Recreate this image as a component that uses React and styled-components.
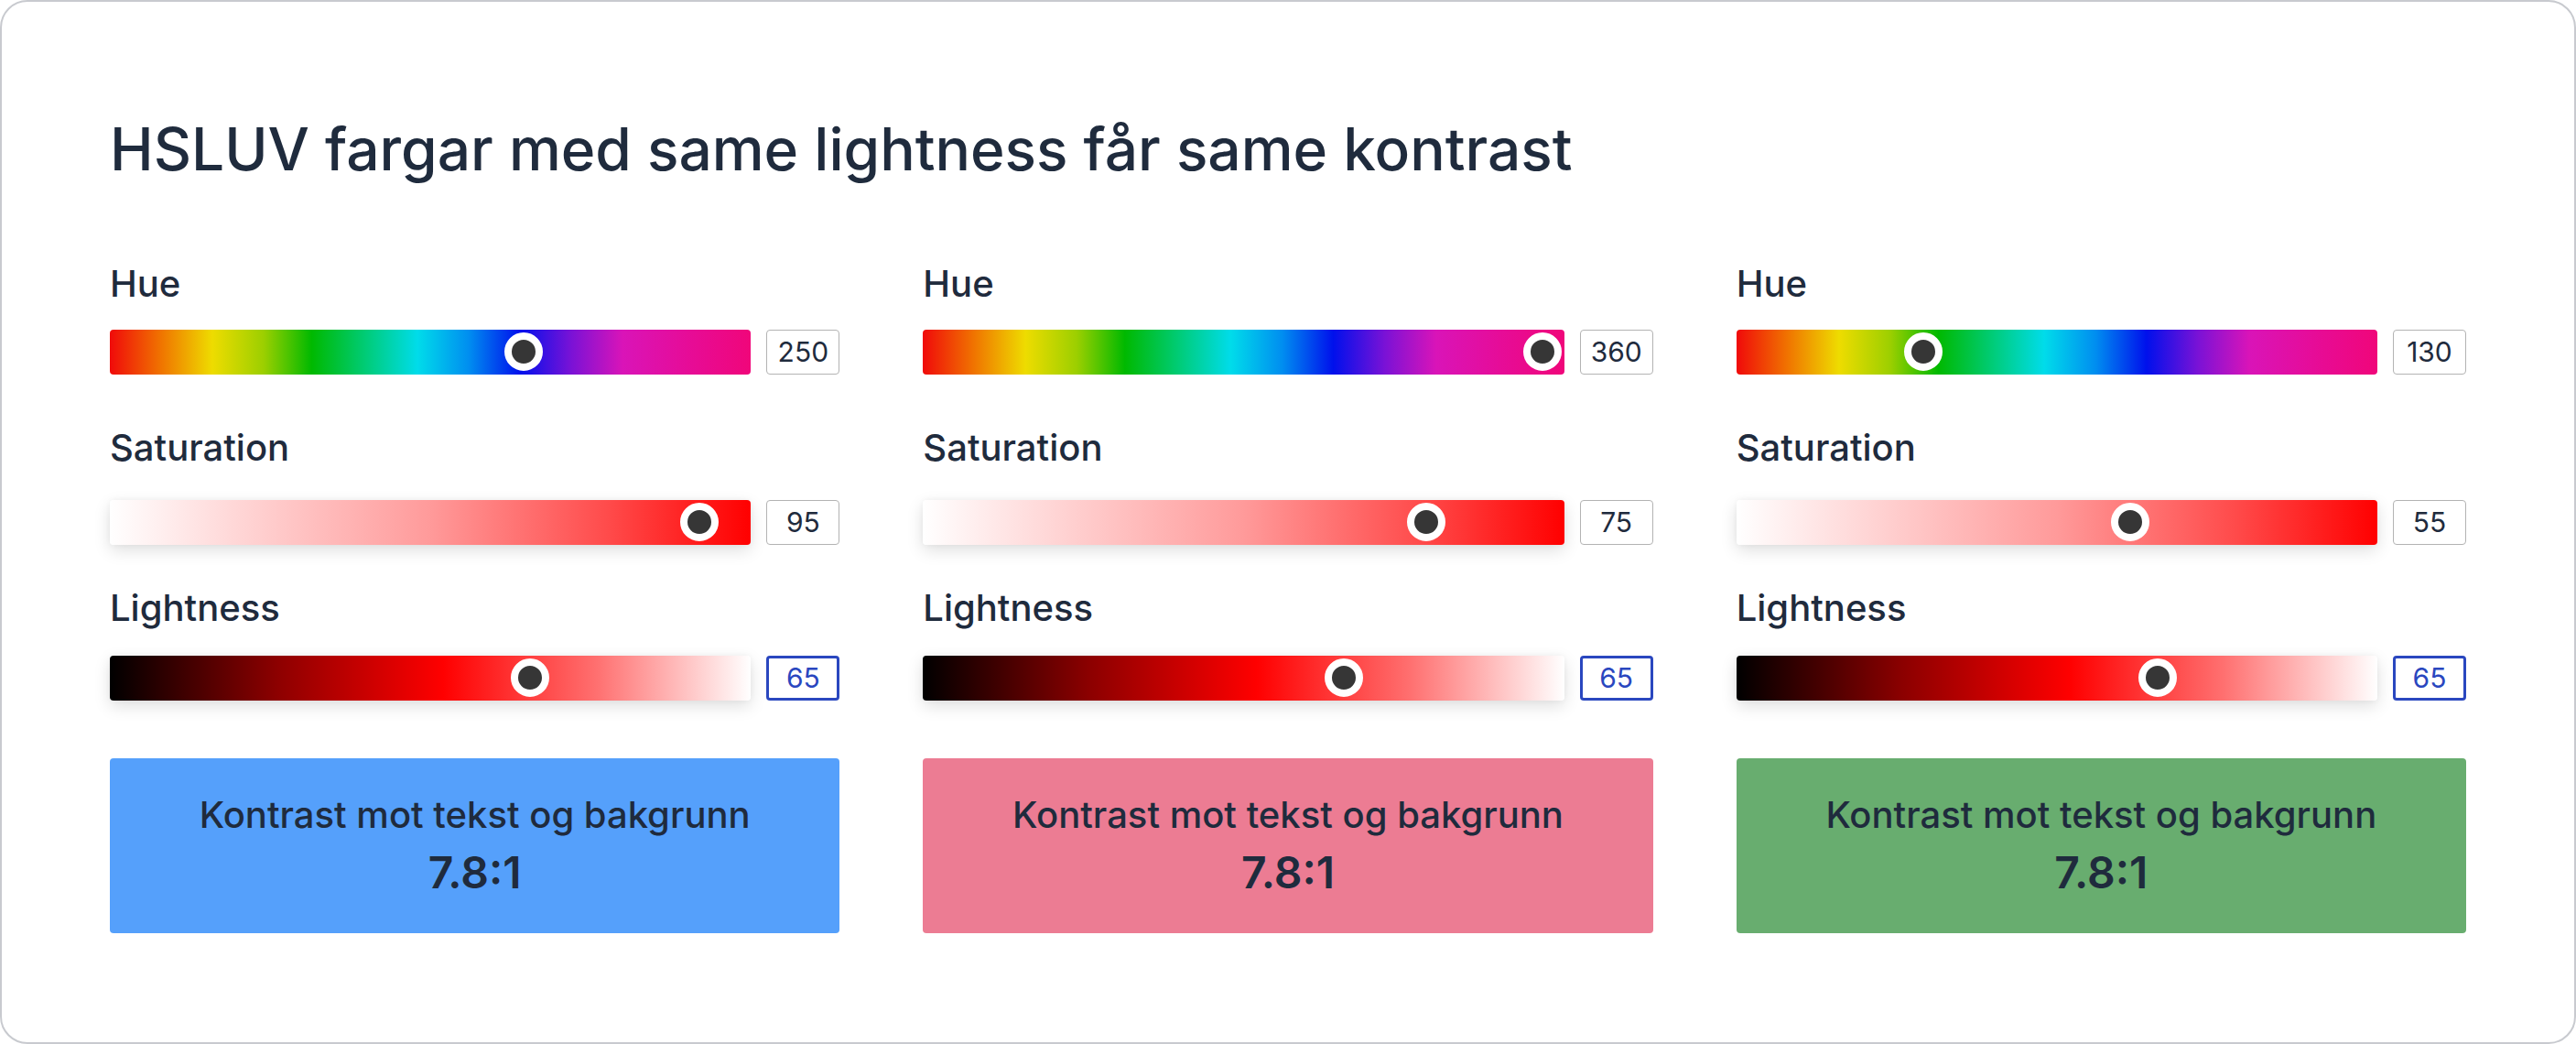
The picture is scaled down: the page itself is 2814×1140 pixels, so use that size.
import React from 'react'
import styled, { createGlobalStyle } from 'styled-components'

const GlobalStyle = createGlobalStyle`
  html, body {
    margin: 0;
    padding: 0;
    background: #ffffff;
  }
  body {
    font-family: Inter, "Noto Sans", "Liberation Sans", sans-serif;
    color: #1f2b3d;
  }
`;

const HUE = `linear-gradient(to right,
  #f00a0a 0%, #f07400 8%, #eedc00 16%, #9ccf00 24%, #00b900 31.5%,
  #00cc78 40%, #00dcea 48%, #008ef0 56%, #0010ec 64%, #7a12d6 72%,
  #d914b8 80%, #e60c98 90%, #f0067a 100%)`;
const SATURATION = 'linear-gradient(to right, #ffffff 0%, #ffd6d6 20%, #ff9a9a 50%, #ff4a4a 78%, #ff0000 100%)';
const LIGHTNESS = 'linear-gradient(to right, #000000 0%, #8c0000 26%, #ff0000 52%, #ff7070 76%, #ffffff 100%)';

const Card = styled.div`
  box-sizing: border-box;
  width: 2814px;
  height: 1140px;
  border: 2px solid #c8cacf;
  border-radius: 30px;
  padding: 123px 118px 0;
  background: #ffffff;
`;

const Title = styled.h1`
  margin: 0;
  font-size: 64px;
  line-height: 1.2;
  font-weight: 500;
  color: #1f2b3d;
`;

const Columns = styled.div`
  display: grid;
  grid-template-columns: repeat(3, 1fr);
  column-gap: 91px;
  margin-top: 84px;
`;

const Column = styled.div`
  display: flex;
  flex-direction: column;
`;

const Field = styled.div`
  display: flex;
  flex-direction: column;
  margin-bottom: ${props => `${props.$after}px`};
`;

const Label = styled.div`
  font-size: 40px;
  line-height: 48px;
  font-weight: 500;
  color: #1f2b3d;
  margin-bottom: ${props => `${props.$gap}px`};
`;

const SliderRow = styled.div`
  display: flex;
  align-items: center;
  gap: 17px;
`;

const Track = styled.div`
  position: relative;
  flex: 1;
  height: 49px;
  border-radius: 4px;
  background: ${props => props.$gradient};
  box-shadow: ${props => props.$shadow ? '0 6px 18px rgba(0, 0, 0, 0.13), 0 0 6px rgba(0, 0, 0, 0.04)' : 'none'};
`;

const Thumb = styled.div`
  position: absolute;
  top: 50%;
  width: 42px;
  height: 42px;
  box-sizing: border-box;
  border: 8px solid #ffffff;
  border-radius: 50%;
  background: #363636;
  transform: translate(-50%, -50%);
`;

const ValueBox = styled.div`
  box-sizing: border-box;
  width: 80px;
  height: 49px;
  display: flex;
  align-items: center;
  justify-content: center;
  border: ${props => props.$active ? '3px solid #2a47bf' : '1.5px solid #b3b3b3'};
  border-radius: 4px;
  background: #ffffff;
  font-size: 30px;
  color: ${props => props.$active ? '#2a47bf' : '#1f2b3d'};
`;

const Swatch = styled.div`
  margin-top: 63px;
  padding: 38px 0 37px;
  border-radius: 4px;
  background: ${props => props.$color};
  display: flex;
  flex-direction: column;
  align-items: center;
  gap: 10px;
  color: #1f2b3d;
`;

const SwatchText = styled.div`
  font-size: 40px;
  line-height: 48px;
  font-weight: 500;
`;

const Ratio = styled.div`
  font-size: 48px;
  line-height: 58px;
  font-weight: 600;
`;

const swatches = [
  { color: '#55a0fb', hue: 250, hueAt: 64.6, sat: 95, satAt: 92.0, light: 65, lightAt: 65.6 },
  { color: '#ec7c93', hue: 360, hueAt: 96.6, sat: 75, satAt: 78.5, light: 65, lightAt: 65.6 },
  { color: '#68ad6f', hue: 130, hueAt: 29.2, sat: 55, satAt: 61.4, light: 65, lightAt: 65.7 },
];

const Slider = ({ label, gradient, shadow, at, value, active, gap, after }) => (
  <Field $after={after}>
    <Label $gap={gap}>{label}</Label>
    <SliderRow>
      <Track $gradient={gradient} $shadow={shadow}>
        <Thumb style={{ left: `${at}%` }} />
      </Track>
      <ValueBox $active={active}>{value}</ValueBox>
    </SliderRow>
  </Field>
)

const App = () => {
  return (
    <>
      <GlobalStyle />
      <Card>
        <Title>HSLUV fargar med same lightness får same kontrast</Title>
        <Columns>
          {swatches.map(s => (
            <Column key={s.color}>
              <Slider label="Hue" gradient={HUE} at={s.hueAt} value={s.hue} gap={26} after={56} />
              <Slider label="Saturation" gradient={SATURATION} shadow at={s.satAt} value={s.sat} gap={33} after={45} />
              <Slider label="Lightness" gradient={LIGHTNESS} shadow at={s.lightAt} value={s.light} active gap={28} after={0} />
              <Swatch $color={s.color}>
                <SwatchText>Kontrast mot tekst og bakgrunn</SwatchText>
                <Ratio>7.8:1</Ratio>
              </Swatch>
            </Column>
          ))}
        </Columns>
      </Card>
    </>
  )
}

export default App
